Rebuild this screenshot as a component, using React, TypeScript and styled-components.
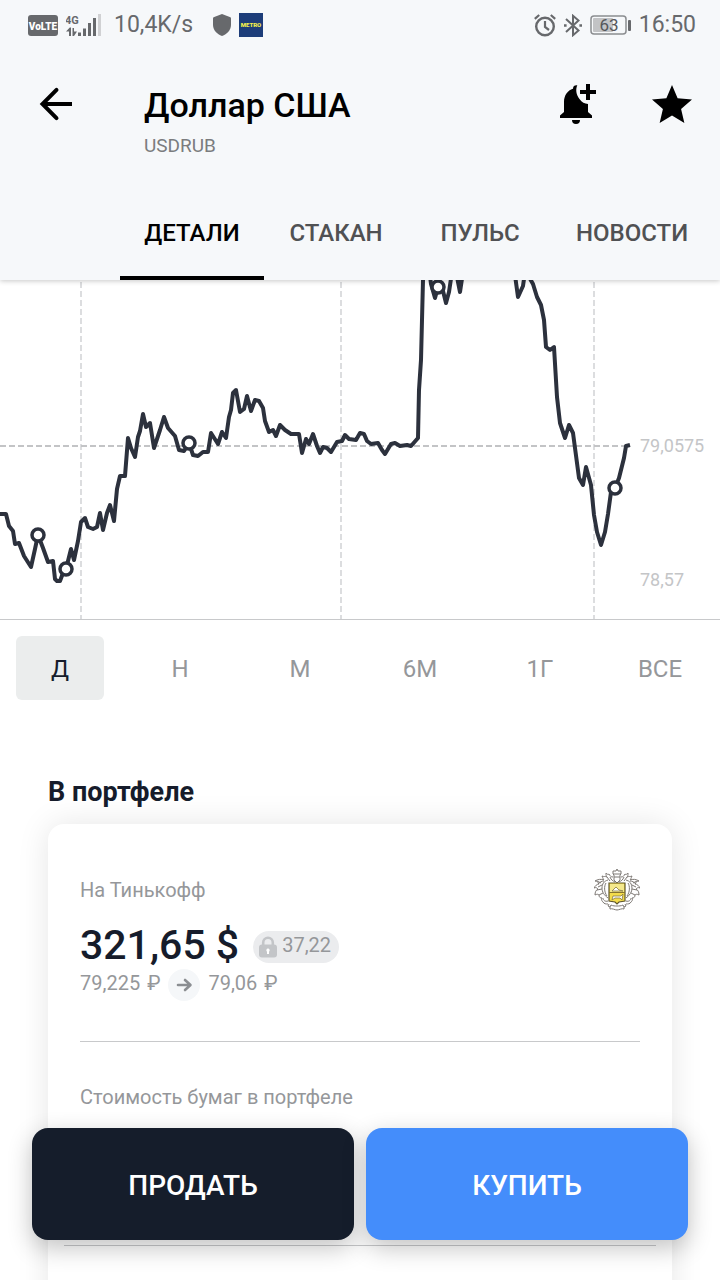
import React, { useState } from 'react';
import styled, { createGlobalStyle } from 'styled-components';

const GlobalStyle = createGlobalStyle`
  *, *::before, *::after { box-sizing: border-box; }
  body { margin: 0; background: #fff; }
  body, button { font-family: Roboto, "Noto Sans", sans-serif; }
  button { border: 0; padding: 0; background: none; cursor: pointer; }
  svg { display: block; flex: none; }
`;

const Screen = styled.div`
  position: relative;
  display: flex;
  flex-direction: column;
  height: 100vh;
  overflow: hidden;
  background: #fff;
  color: #161c2b;
`;

const Header = styled.header`
  position: relative;
  z-index: 1;
  flex: none;
  background: #f6f8fa;
  box-shadow: 0 1px 5px rgba(0, 0, 0, 0.22);
`;

const StatusBar = styled.div`
  display: flex;
  align-items: center;
  justify-content: space-between;
  height: 50px;
  padding: 0 24px 0 28px;
  color: #67696c;
  font-size: 23px;
  line-height: 32px;
`;

const StatusGroup = styled.div`
  display: flex;
  align-items: center;
  gap: 8px;
`;

const Speed = styled.span`
  padding: 0 12px 0 4px;
`;

const AppBar = styled.div`
  display: flex;
  align-items: flex-start;
  height: 134px;
  padding: 30px 24px 0 32px;
`;

const IconButton = styled.button`
  width: 48px;
  height: 48px;
  color: #000;
`;

const TitleBlock = styled.div`
  flex: 1;
  padding: 4px 0 0 64px;
`;

const Title = styled.h1`
  margin: 0;
  color: #000;
  font-size: 34px;
  font-weight: 500;
  line-height: 42px;
`;

const Ticker = styled.div`
  padding-top: 8px;
  color: #7b7c7e;
  font-size: 19px;
  line-height: 24px;
`;

const Actions = styled.div`
  display: flex;
  gap: 48px;
`;

const Tabs = styled.nav`
  display: flex;
  padding-left: 120px;
  overflow: hidden;
`;

const Tab = styled.button<{ $active: boolean }>`
  flex: none;
  min-width: 144px;
  height: 96px;
  padding: 6px 24px 0;
  border-bottom: 4px solid ${(p) => (p.$active ? '#000' : 'transparent')};
  color: ${(p) => (p.$active ? '#000' : '#505153')};
  font-size: 24px;
  font-weight: 500;
  line-height: 32px;
  white-space: nowrap;
`;

const Content = styled.main`
  flex: 1;
  overflow-y: auto;
  scrollbar-width: none;
`;

const ChartArea = styled.section`
  border-bottom: 1px solid #c8c9cb;

  svg {
    width: 100%;
    height: auto;
  }
`;

const Ranges = styled.div`
  display: grid;
  grid-template-columns: repeat(6, 1fr);
  padding: 16px 0;
`;

const RangeButton = styled.button<{ $active: boolean }>`
  height: 64px;
  margin: 0 16px;
  padding-top: 2px;
  border-radius: 6px;
  background: ${(p) => (p.$active ? '#ebeded' : 'transparent')};
  color: ${(p) => (p.$active ? '#161c2b' : '#95979a')};
  font-size: 24px;
  line-height: 32px;
`;

const Portfolio = styled.section`
  padding: 60px 48px 0;
`;

const SectionTitle = styled.h2`
  margin: 0 0 16px;
  font-size: 27px;
  font-weight: 700;
  line-height: 32px;
`;

const Card = styled.article`
  padding: 44px 0 160px;
  border-radius: 16px;
  background: #fff;
  box-shadow: 0 0 32px rgba(0, 0, 0, 0.1);
`;

const CardBody = styled.div`
  padding: 0 32px;
`;

const CardHead = styled.div`
  display: flex;
  align-items: center;
  justify-content: space-between;
  height: 44px;
`;

const Caption = styled.div`
  color: #95979a;
  font-size: 20px;
  line-height: 24px;
`;

const AmountRow = styled.div`
  display: flex;
  align-items: flex-end;
  gap: 14px;
  margin-top: 9px;
`;

const Amount = styled.strong`
  font-size: 41px;
  font-weight: 500;
  line-height: 48px;
`;

const LockedPill = styled.span`
  display: flex;
  align-items: center;
  gap: 5px;
  height: 32px;
  margin-bottom: 6px;
  padding: 0 8px 0 6px;
  border-radius: 16px;
  background: #ebecee;
  color: #95979a;
  font-size: 20px;
  line-height: 24px;

  span {
    padding-bottom: 4px;
  }
`;

const PriceRow = styled.div`
  display: flex;
  align-items: center;
  gap: 8px;
  color: #95979a;
  font-size: 20px;
  line-height: 28px;
`;

const Price = styled.span`
  display: flex;
  gap: 7px;
  padding-bottom: 4px;
`;

const Divider = styled.hr<{ $space: string }>`
  height: 1px;
  margin: ${(p) => p.$space};
  border: 0;
  background: #c8c9cb;
`;

const TradeBar = styled.div`
  position: absolute;
  right: 32px;
  bottom: 40px;
  left: 32px;
  display: grid;
  grid-template-columns: 1fr 1fr;
  gap: 12px;
`;

const TradeButton = styled.button<{ $color: string }>`
  height: 112px;
  padding-top: 4px;
  border-radius: 16px;
  background: ${(p) => p.$color};
  box-shadow: 0 8px 24px rgba(0, 0, 0, 0.24);
  color: #fff;
  font-size: 28px;
  font-weight: 500;
  line-height: 36px;
`;

const VolteIcon = () => (
  <svg width="30" height="21" viewBox="0 0 30 21">
    <rect width="30" height="21" rx="3" fill="#67696c" />
    <text x="15" y="14.500" fill="#fff" fontSize="10" fontWeight="900" textAnchor="middle">VoLTE</text>
  </svg>
);

const SignalIcon = () => (
  <svg width="36" height="23" viewBox="0 0 36 23" fill="#67696c">
    <text x="-1" y="10" fontSize="11" fontWeight="700">4G</text>
    <path d="M3 22v-4.500H0L3.800 13.500H5V22zM6.500 14H8v3.500h3L8 22H6.500zM12 18.500h3V22h-3zM17 14.500h3V22h-3zM22 9h3v13h-3zM27 4h3v18h-3z" />
    <path d="M32 0h3v22h-3z" fill="#d0d1d3" />
  </svg>
);

const ShieldIcon = () => (
  <svg width="18" height="22" viewBox="0 0 18 22" fill="#67696c">
    <path d="M9 0l8.400 3.200c.5.200.6.500.6 1V11c0 5-4 9-9 11-5-2-9-6-9-11V4.200c0-.5.1-.8.600-1z" />
  </svg>
);

const MetroIcon = () => (
  <svg width="24" height="24" viewBox="0 0 24 24">
    <rect width="24" height="24" fill="#1d3d79" />
    <text x="12" y="14" fill="#f3ee4b" fontSize="6" fontWeight="900" textAnchor="middle">METRO</text>
  </svg>
);

const AlarmIcon = () => (
  <svg width="22" height="23" viewBox="0 0 22 23" fill="none" stroke="#67696c">
    <circle cx="11" cy="12.500" r="8.800" strokeWidth="2.400" />
    <path d="M11 7v6l4 3" strokeWidth="2.200" />
    <path d="M.8 4.800L5.200 1M21.200 4.800L16.800 1" strokeWidth="2.200" />
  </svg>
);

const BluetoothIcon = () => (
  <svg width="18" height="23" viewBox="0 0 18 23" fill="none" stroke="#67696c" strokeWidth="2">
    <path d="M2 5l12.500 11.500-5.500 4.700V1.800l5.500 4.700L2 18" />
    <path d="M0 11.500h2.600M15.400 11.500H18" strokeWidth="2.600" />
  </svg>
);

const BatteryIcon = () => (
  <svg width="41" height="20" viewBox="0 0 41 20">
    <rect x="1" y="1" width="35" height="18" rx="3" fill="none" stroke="#8b8d90" strokeWidth="1.500" />
    <rect x="3" y="3" width="20" height="14" rx="1" fill="#c2c3c5" />
    <rect x="38" y="5" width="3" height="11" rx="1" fill="#67696c" />
    <text x="19" y="16" fill="#55575a" fontSize="17" textAnchor="middle">63</text>
  </svg>
);

const BackIcon = () => (
  <svg width="48" height="48" viewBox="0 0 48 48" fill="none" stroke="currentColor" strokeWidth="4">
    <path d="M40 24H11" />
    <path d="M24.500 9.800L10.500 24l14 14.200" strokeLinecap="round" strokeLinejoin="miter" />
  </svg>
);

const BellPlusIcon = () => (
  <svg width="48" height="48" viewBox="0 0 48 48" fill="currentColor">
    <path d="M21 8.800C21 6 22.500 5 25.300 5.200 23.500 9 24 14.500 27.500 19c2.500 3.300 5 4.800 8.500 5v8l4 3.600V38H8v-2.400L12 32V22c0-6.500 3.600-11.500 9-13.200zM20 40h8a4 4 0 0 1-8 0zM34 4h4v6h6v4h-6v6h-4v-6h-6v-4h6z" />
  </svg>
);

const StarIcon = () => (
  <svg width="48" height="48" viewBox="0 0 24 24" fill="currentColor">
    <path d="M12 17.770L18.180 21.500l-1.640-7.030L22 9.740l-7.190-.61L12 2.500 9.190 9.130 2 9.740l5.460 4.730L5.820 21.500z" />
  </svg>
);

const LockIcon = () => (
  <svg width="18" height="22" viewBox="0 0 18 22">
    <path d="M4.200 10V6.500a4.800 4.800 0 0 1 9.600 0V10" fill="none" stroke="#c3c5c8" strokeWidth="2.600" />
    <rect y="8.500" width="18" height="13" rx="3" fill="#c3c5c8" />
    <path d="M9 12.500a1.800 1.800 0 0 1 1 3.200V18H8v-2.300a1.800 1.800 0 0 1 1-3.200z" fill="#fff" />
  </svg>
);

const PriceArrow = () => (
  <svg width="32" height="32" viewBox="0 0 32 32">
    <circle cx="16" cy="16" r="16" fill="#f5f7f9" />
    <path d="M10 16h12M17 11l5.500 5-5.500 5" fill="none" stroke="#8b8e92" strokeWidth="2.600" strokeLinecap="round" strokeLinejoin="round" />
  </svg>
);

const CrestHalf = () => (
  <>
    <path d="M19 8c-2 0-3-1-4-3-1 1-2 0-3-1 0 2 0 3 1 4-2-1-3 0-5-1 1 2 1 3 2 4-3-1-6-1-9 1 2 0 3 1 4 3-2 0-4 2-5 4 2-1 3 0 4 1-2 1-3 3-3 6 2-1 3-1 4 0 0 2 1 3 3 3-1 2 0 3 1 4 1 2 3 2 5 2" />
    <path d="M14 11c-4 1-6 4-6 8s2 7 6 10M12 14c-2 3-2 9 1 13M10 12c-2 0-4 1-6 3M8 16l-4 2M8 20l-5 1M9 24l-4 2M13 8l3 4M16 8c1 3 3 4 5 5M3 12l4 2" />
    <path d="M9 29c0 2 2 4 5 3M15 35l-1 2 2 1 0 2c2-1 5 1 7 1M16 38l1-2c2 1 4 1 6 1" />
  </>
);

const Crest = () => (
  <svg width="46" height="42" viewBox="0 0 46 42" fill="none" stroke="#7d7874" strokeWidth="1" role="img" aria-label="Тинькофф">
    <CrestHalf />
    <g transform="translate(46 0) scale(-1 1)">
      <CrestHalf />
    </g>
    <path d="M19 2h3l1-2 1 2h3v3l-1 1v5l-3 3-3-3V6l-1-1zM19 5h8M20 8h6" fill="#fff" />
    <path d="M15 14h16v18l-6 1-2 2-2-2-6-1z" fill="#f4dc4b" stroke="#5d552e" strokeWidth="1.200" />
    <path d="M16 15h14v8H16z" fill="#f5e98c" stroke="none" />
    <path d="M15 23.500h16" stroke="#87742f" />
    <path d="M18 22l4-4 3 3 4 1zM18 31l1-4h8l2-2-1 6-2-2h-5z" fill="#fff" stroke="#857940" strokeWidth=".8" />
  </svg>
);

const LINE =
  'M0 234L6 234L9 246L13 251L15 264L19 263L24 276L31 287L35 269L38 255L43 268L48 282L53 281L55 299L57 301L60 301L63 293L66 289L71 269L74 280L78 261L81 242L85 238L88 247L93 249L97 247L100 233L103 250L107 233L110 225L114 241L117 209L120 196L125 196L128 158L131 168L135 177L138 157L140 151L143 134L146 147L150 143L154 168L160 150L164 137L168 148L175 156L179 170L184 171L189 163L193 175L198 176L203 172L208 172L211 153L218 164L222 152L226 158L229 137L231 130L233 113L236 110L240 132L244 129L247 116L251 131L255 120L259 121L263 128L265 141L269 152L273 150L276 156L280 145L285 150L291 154L299 154L302 173L306 159L309 164L313 154L317 166L320 173L323 167L327 168L331 172L337 162L342 161L345 155L349 159L356 160L360 153L364 154L367 161L371 164L378 163L382 170L385 174L391 164L395 163L400 166L407 165L411 166L418 158L419 110L421 80L423 0L424 -20M428 -20L431 4L435 18L438 7L442 7L446 23L449 12L452 -8L456 -8L460 12L463 -8M514 -12L518 17L523 6L525 -8M529 -3L533 4L537 17L541 25L544 40L546 67L550 70L554 67L557 117L560 143L565 158L569 145L573 153L575 168L579 198L583 205L586 187L591 205L594 235L597 252L601 265L605 252L608 234L611 212L615 208L619 198L622 186L624 178L626 166L630 165';

const MARKERS = [
  [38, 255],
  [66, 289],
  [189, 163],
  [438, 7],
  [615, 208],
];

const GRID_X = [81, 341, 594];

const PriceChart = () => (
  <svg viewBox="0 0 720 339" role="img" aria-label="График USDRUB">
    {GRID_X.map((x) => (
      <path key={x} d={`M${x} 2V339`} stroke="#dcdddf" strokeWidth="2" strokeDasharray="6 3" />
    ))}
    <path d="M0 166H630" stroke="#c3c4c6" strokeWidth="2" strokeDasharray="6 3" />
    <path d={LINE} fill="none" stroke="#2c313d" strokeWidth="4" strokeLinejoin="round" />
    {MARKERS.map(([x, y]) => (
      <circle key={x} cx={x} cy={y} r="6" fill="#fff" stroke="#2c313d" strokeWidth="3.500" />
    ))}
    <g fill="#c4c5c7" fontSize="18">
      <text x="640" y="172">79,0575</text>
      <text x="640" y="306">78,57</text>
    </g>
  </svg>
);

const TABS = ['ДЕТАЛИ', 'СТАКАН', 'ПУЛЬС', 'НОВОСТИ'];
const RANGES = ['Д', 'Н', 'М', '6М', '1Г', 'ВСЕ'];

export default function App() {
  const [tab, setTab] = useState(TABS[0]);
  const [range, setRange] = useState(RANGES[0]);

  return (
    <Screen>
      <GlobalStyle />
      <Header>
        <StatusBar>
          <StatusGroup>
            <VolteIcon />
            <SignalIcon />
            <Speed>10,4K/s</Speed>
            <ShieldIcon />
            <MetroIcon />
          </StatusGroup>
          <StatusGroup>
            <AlarmIcon />
            <BluetoothIcon />
            <BatteryIcon />
            <span>16:50</span>
          </StatusGroup>
        </StatusBar>
        <AppBar>
          <IconButton aria-label="Назад"><BackIcon /></IconButton>
          <TitleBlock>
            <Title>Доллар США</Title>
            <Ticker>USDRUB</Ticker>
          </TitleBlock>
          <Actions>
            <IconButton aria-label="Добавить уведомление"><BellPlusIcon /></IconButton>
            <IconButton aria-label="В избранное"><StarIcon /></IconButton>
          </Actions>
        </AppBar>
        <Tabs>
          {TABS.map((name) => (
            <Tab key={name} $active={name === tab} onClick={() => setTab(name)}>{name}</Tab>
          ))}
        </Tabs>
      </Header>

      <Content>
        <ChartArea><PriceChart /></ChartArea>
        <Ranges>
          {RANGES.map((name) => (
            <RangeButton key={name} $active={name === range} onClick={() => setRange(name)}>{name}</RangeButton>
          ))}
        </Ranges>
        <Portfolio>
          <SectionTitle>В портфеле</SectionTitle>
          <Card>
            <CardBody>
              <CardHead>
                <Caption>На Тинькофф</Caption>
                <Crest />
              </CardHead>
              <AmountRow>
                <Amount>321,65 $</Amount>
                <LockedPill><LockIcon /><span>37,22</span></LockedPill>
              </AmountRow>
              <PriceRow>
                <Price><span>79,225</span><span>₽</span></Price>
                <PriceArrow />
                <Price><span>79,06</span><span>₽</span></Price>
              </PriceRow>
              <Divider $space="40px 0 43px" />
              <Caption>Стоимость бумаг в портфеле</Caption>
            </CardBody>
            <Divider $space="136px 16px 0" />
          </Card>
        </Portfolio>
      </Content>

      <TradeBar>
        <TradeButton $color="#151d2b">ПРОДАТЬ</TradeButton>
        <TradeButton $color="#448dfb">КУПИТЬ</TradeButton>
      </TradeBar>
    </Screen>
  );
}
